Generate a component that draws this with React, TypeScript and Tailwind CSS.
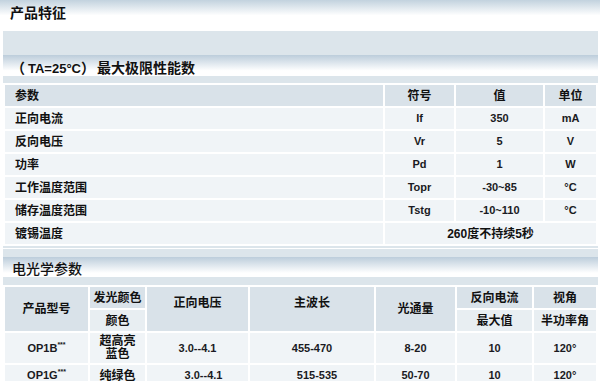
import React from "react";

const FONT = { fontFamily: '"Liberation Sans", Arial, "Noto Sans CJK SC", sans-serif' };

const H = "bg-[#d9e2e9]";
const HL = "bg-[#e8eef2]";
const D = "bg-[#f0f4f7]";

function C({ className = "", children }: { className?: string; children?: React.ReactNode }) {
  return (
    <div className={`flex items-center justify-center text-[12px] font-bold text-[#111] ${className}`}>
      {children}
    </div>
  );
}

function V({ className = "", children }: { className?: string; children?: React.ReactNode }) {
  return (
    <div className={`flex items-center justify-center text-[11px] font-bold text-[#1a1a22] ${className}`}>
      {children}
    </div>
  );
}

const rows1: [string, string, string, string][] = [
  ["正向电流", "If", "350", "mA"],
  ["反向电压", "Vr", "5", "V"],
  ["功率", "Pd", "1", "W"],
  ["工作温度范围", "Topr", "-30~85", "°C"],
  ["储存温度范围", "Tstg", "-10~110", "°C"],
];

export default function App() {
  return (
    <div className="w-[600px] h-[381px] overflow-hidden bg-white" style={FONT}>
      <div className="h-[31px] bg-[linear-gradient(to_bottom,#c2d2de,#ffffff_50%)] pl-[10px] pt-[4px] text-[14px] font-bold leading-[18px] text-[#111]">
        产品特征
      </div>

      <div className="ml-[3px] w-[595px] bg-[#dce5eb] pb-[2px]">
        <div className="h-[24px]" />
        <div className="flex h-[21px] items-center bg-[linear-gradient(to_bottom,#bccddb,#ffffff_75%)] pl-[8px] pt-[6px] text-[14px] font-bold leading-[17px] text-[#111] [text-spacing-trim:space-all]">
          <span>（</span>
          <span className="ml-[3px] text-[13px]">TA=25°C</span>
          <span>）</span>
          <span className="ml-[2px]">最大极限性能数</span>
        </div>
        <div className="h-[7px]" />
        <div className="bg-white p-[2px]">
          <div className="grid grid-cols-[378px_69px_87px_51px] auto-rows-[21px] gap-[2px]">
            <C className={`${H} justify-start pl-[10px]`}>参数</C>
            <C className={H}>符号</C>
            <C className={H}>值</C>
            <C className={H}>单位</C>
            {rows1.map((r) => (
              <React.Fragment key={r[0]}>
                <C className={`${D} justify-start pl-[10px]`}>{r[0]}</C>
                <V className={D}>{r[1]}</V>
                <V className={D}>{r[2]}</V>
                <V className={D}>{r[3]}</V>
              </React.Fragment>
            ))}
            <C className={`${D} justify-start pl-[10px]`}>镀锡温度</C>
            <C className={`${D} col-span-3 text-[11px]`}>260度不持续5秒</C>
          </div>
        </div>
      </div>

      <div className="ml-[3px] mt-[1px] w-[595px] bg-[#dce5eb]">
        <div className="h-[8px]" />
        <div className="h-[20px] bg-[linear-gradient(to_bottom,#bccddb,#ffffff_80%)] pl-[9px] pt-[4px] text-[14px] font-medium leading-[17px] text-[#111]">
          电光学参数
        </div>
        <div className="h-[8px]" />
        <div className="bg-white p-[2px]">
          <div className="grid grid-cols-[83px_55px_101px_124px_79px_75px_62px] grid-rows-[21px_21px_30px_21px] gap-[2px]">
            <C className={`${H} row-span-2`}>产品型号</C>
            <C className={H}>发光颜色</C>
            <C className={`${H} row-span-2 items-start pt-[7px]`}>正向电压</C>
            <C className={`${H} row-span-2 items-start pt-[7px]`}>主波长</C>
            <C className={`${H} row-span-2`}>光通量</C>
            <C className={H}>反向电流</C>
            <C className={H}>视角</C>
            <C className={HL}>颜色</C>
            <C className={HL}>最大值</C>
            <C className={HL}>半功率角</C>

            <V className={D}>
              OP1B<span className="relative -top-[3px] text-[7px]">***</span>
            </V>
            <C className={`${D} flex-col`}>
              <span className="block h-[13px] text-[12px] leading-[13px]">超高亮</span>
              <span className="block h-[13px] text-[12px] leading-[13px]">蓝色</span>
            </C>
            <V className={D}>3.0--4.1</V>
            <V className={D}>455-470</V>
            <V className={D}>8-20</V>
            <V className={D}>10</V>
            <V className={D}>120°</V>

            <V className={D}>
              OP1G<span className="relative -top-[3px] text-[7px]">***</span>
            </V>
            <C className={D}>纯绿色</C>
            <V className={`${D} pl-[12px]`}>3.0--4.1</V>
            <V className={`${D} pl-[10px]`}>515-535</V>
            <V className={D}>50-70</V>
            <V className={D}>10</V>
            <V className={D}>120°</V>
          </div>
        </div>
      </div>
    </div>
  );
}
